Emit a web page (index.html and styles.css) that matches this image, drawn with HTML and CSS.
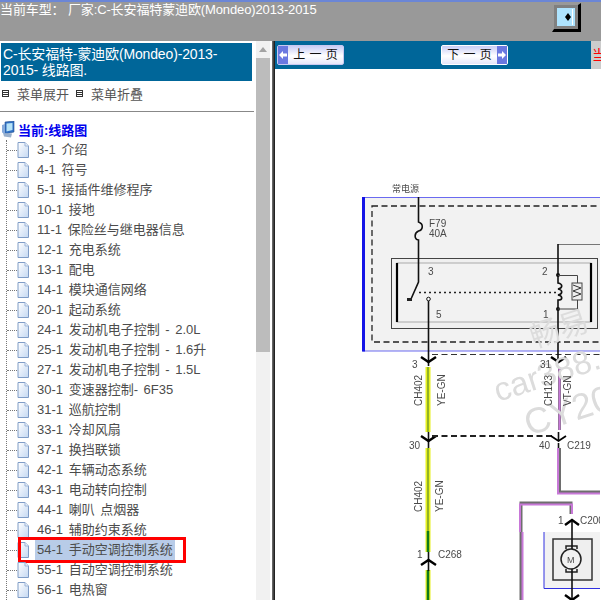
FILE: index.html
```html
<!DOCTYPE html>
<html lang="zh">
<head>
<meta charset="utf-8">
<title>线路图</title>
<link rel="stylesheet" href="styles.css">
</head>
<body>
<svg class="defs" width="0" height="0" aria-hidden="true">
  <defs>
    <linearGradient id="pg" x1="0" y1="0" x2="1" y2="1"><stop offset="0" stop-color="#ffffff"/><stop offset="1" stop-color="#c4d8f2"/></linearGradient>
    <symbol id="file" viewBox="0 0 12 16">
      <path d="M1 .5H8L11.500 4V15.500H1Z" fill="url(#pg)" stroke="#7f9cc6"/>
      <path d="M8 .5V4H11.500" fill="#e8f0fa" stroke="#9db5d8"/>
    </symbol>
  </defs>
</svg>
<header class="topbar">
  <div class="model">当前车型： 厂家:C-长安福特蒙迪欧(Mondeo)2013-2015</div>
  <div class="toggle"><span class="toggle-inner"><svg width="18" height="18" viewBox="0 0 18 18"><path d="M11 5 14 9 11 13 8 9Z" fill="#000"/><path d="M15.500 1V17" stroke="#fff"/></svg></span></div>
</header>
<main class="main">
  <aside class="side">
    <h1 class="title">C-长安福特-蒙迪欧(Mondeo)-2013-2015- 线路图.</h1>
    <div class="menu">
      <span class="menu-item"><i class="box"></i>菜单展开</span>
      <span class="menu-item"><i class="box"></i>菜单折叠</span>
    </div>
    <hr class="rule">
    <div class="root">
      <svg class="root-icon" width="13" height="17" viewBox="0 0 13 17"><path d="M3 1 12 0V11L3 13Z" fill="#2f6fc4" stroke="#25528f" stroke-width=".6"/><path d="M4.500 2.500 10.500 2V9L4.500 10.500Z" fill="#b7e3f7"/><path d="M1 12 10 12.500 9 16.500 2 15.500Z" fill="#9ab0cc"/><path d="M0 4 3 3V13L0 11.500Z" fill="#86aadb"/></svg>
      <span>当前:线路图</span>
    </div>
    <ul class="tree">
      <li><svg class="file"><use href="#file"/></svg><span class="label">3-1 介绍</span></li>
      <li><svg class="file"><use href="#file"/></svg><span class="label">4-1 符号</span></li>
      <li><svg class="file"><use href="#file"/></svg><span class="label">5-1 接插件维修程序</span></li>
      <li><svg class="file"><use href="#file"/></svg><span class="label">10-1 接地</span></li>
      <li><svg class="file"><use href="#file"/></svg><span class="label">11-1 保险丝与继电器信息</span></li>
      <li><svg class="file"><use href="#file"/></svg><span class="label">12-1 充电系统</span></li>
      <li><svg class="file"><use href="#file"/></svg><span class="label">13-1 配电</span></li>
      <li><svg class="file"><use href="#file"/></svg><span class="label">14-1 模块通信网络</span></li>
      <li><svg class="file"><use href="#file"/></svg><span class="label">20-1 起动系统</span></li>
      <li><svg class="file"><use href="#file"/></svg><span class="label">24-1 发动机电子控制 - 2.0L</span></li>
      <li><svg class="file"><use href="#file"/></svg><span class="label">25-1 发动机电子控制 - 1.6升</span></li>
      <li><svg class="file"><use href="#file"/></svg><span class="label">27-1 发动机电子控制 - 1.5L</span></li>
      <li><svg class="file"><use href="#file"/></svg><span class="label">30-1 变速器控制- 6F35</span></li>
      <li><svg class="file"><use href="#file"/></svg><span class="label">31-1 巡航控制</span></li>
      <li><svg class="file"><use href="#file"/></svg><span class="label">33-1 冷却风扇</span></li>
      <li><svg class="file"><use href="#file"/></svg><span class="label">37-1 换挡联锁</span></li>
      <li><svg class="file"><use href="#file"/></svg><span class="label">42-1 车辆动态系统</span></li>
      <li><svg class="file"><use href="#file"/></svg><span class="label">43-1 电动转向控制</span></li>
      <li><svg class="file"><use href="#file"/></svg><span class="label">44-1 喇叭 点烟器</span></li>
      <li><svg class="file"><use href="#file"/></svg><span class="label">46-1 辅助约束系统</span></li>
      <li class="current"><svg class="file"><use href="#file"/></svg><span class="label">54-1 手动空调控制系统</span><span class="callout"></span></li>
      <li><svg class="file"><use href="#file"/></svg><span class="label">55-1 自动空调控制系统</span></li>
      <li><svg class="file"><use href="#file"/></svg><span class="label">56-1 电热窗</span></li>
    </ul>
  </aside>
  <div class="scrollbar"><span class="arrow"></span><span class="thumb"></span></div>
  <div class="splitter"></div>
  <section class="content">
    <div class="toolbar">
      <div class="pager">
        <button class="page-btn prev"><span class="cap"><svg width="8" height="10" viewBox="0 0 8 10"><path d="M0 5 4 1V3.500H8V6.500H4V9Z" fill="#fff"/></svg></span><span class="btn-text">上 一 页</span></button>
        <button class="page-btn next"><span class="btn-text">下 一 页</span><span class="cap"><svg width="8" height="10" viewBox="0 0 8 10"><path d="M8 5 4 1V3.500H0V6.500H4V9Z" fill="#fff"/></svg></span></button>
      </div>
      <div class="note">当</div>
    </div>
    <svg class="diagram" viewBox="276 69 325 531" width="325" height="531">
      <!-- fuse box -->
      <rect x="364" y="197.500" width="240" height="153.500" fill="#f2f2f2" stroke="#6a6af0"/>
      <path d="M364.500 197V351.500" stroke="#1414e6" stroke-width="3"/>
      <rect x="373" y="206" width="240" height="136" fill="none" stroke="#222" stroke-width="1.300" stroke-dasharray="6 3.500"/>
      <path d="M433 354.500H604" stroke="#333" stroke-width="1.200" stroke-dasharray="6 3.500"/>
      <!-- relay -->
      <rect x="392.500" y="258.500" width="206" height="70" fill="#f0f0f0" stroke="#444"/>
      <rect x="398" y="263" width="194" height="59" fill="#f2f2f2" stroke="#aaa"/>
      <path d="M398 263V322M592 263V322" stroke="#000" stroke-width="2.200"/>
      <!-- feed line and fuse -->
      <path class="wire" d="M419.500 197V222C425 224 424 230 419.500 231C415 233 415 239 419.500 240V282L412 299"/>
      <path d="M408 298H413V301H408Z" fill="#222"/>
      <path d="M420 292.500H558" stroke="#222" stroke-width="1.500" stroke-dasharray="2 3"/>
      <circle cx="429.500" cy="299" r="1.800" fill="#fff" stroke="#111"/>
      <path class="wire" d="M429.500 301V366"/>
      <path class="chev" d="M422 357 429.500 362 437 357"/>
      <!-- coil side -->
      <path d="M601 244.500H559" stroke="#777"/>
      <path class="wire" d="M559 244V283C564 284 564 288 559 289C564 290 564 294 559 295C564 296 564 300 559 300V362"/>
      <circle cx="559" cy="275" r="2" fill="#111"/><circle cx="559" cy="309" r="2" fill="#111"/>
      <path d="M559 275.500H578.500V309H559" fill="none" stroke="#444"/>
      <rect x="573" y="283" width="10" height="17" fill="#eee" stroke="#444"/>
      <path d="M574 285 582 288 574 291 582 294 574 297" fill="none" stroke="#333"/>
      <path class="chev" d="M552 357 559.500 362 567 357"/>
      <!-- CH402 -->
      <path d="M429 367V432M429 448V531" stroke="#e6f01e" stroke-width="5"/>
      <path d="M429 367V432M429 448V531" stroke="#5c8a2a" stroke-width="1.200"/>
      <path d="M429 531V552M429 570V600" stroke="#e6f01e" stroke-width="5"/>
      <path d="M429 531V552M429 570V600" stroke="#0f7a1c" stroke-width="2.500"/>
      <path class="wire" d="M429.500 432V448M429.500 552V571"/>
      <path class="chev" d="M422 436 429.500 441 437 436"/>
      <path class="chev" d="M422 565 429.500 560 437 565"/>
      <path d="M433 436H556" stroke="#222" stroke-width="2" stroke-dasharray="6 3.500"/>
      <!-- purple wire -->
      <path class="wire-grey" d="M560.500 367V430M560.500 448V492H604"/>
      <path class="wire-purple" d="M560.500 367V430M559 448V493.500H604"/>
      <path class="wire" d="M559.500 432V440M559.500 443V448"/>
      <path class="chev thin" d="M552 436 559.500 441 567 436"/>
      <path class="wire-grey" d="M522 600V503H572V514"/>
      <path class="wire-purple" d="M523.500 600V532M521 532V504.500H573V514"/>
      <!-- motor -->
      <rect x="545" y="532" width="60" height="56" fill="#f2f2f2"/>
      <path d="M545 532V588.500H604" fill="none" stroke="#3030e0"/>
      <rect x="554" y="539" width="39" height="41" fill="#efefef" stroke="#333" stroke-width="1.500"/>
      <circle cx="572" cy="559" r="10" fill="#f2f2f2" stroke="#222" stroke-width="1.500"/>
      <path d="M567 549V546H578V549M567 569V572H578V569" fill="none" stroke="#222" stroke-width="1.500"/>
      <path class="wire" d="M573 519V549M573 569V600"/>
      <path class="chev" d="M566 525 573 520 580 525"/>
      <path class="chev" d="M566 595 573 600 580 595"/>
      <!-- watermark -->
      <g class="watermark">
        <text x="535" y="348" transform="rotate(-18 535 348)">畅易</text>
        <text class="wm-mid" x="499" y="402" transform="rotate(-18 499 402)">car388.c</text>
        <text class="wm-big" x="530" y="436" transform="rotate(-18 530 436)">CY201</text>
      </g>
      <!-- labels -->
      <g class="lbl">
        <text x="393" y="192" class="tiny">常电源</text>
        <text x="430" y="227">F79</text><text x="430" y="237">40A</text>
        <text x="429" y="275">3</text><text x="543" y="275">2</text>
        <text x="437" y="318">5</text><text x="544" y="318">1</text>
        <text x="413" y="368">3</text><text x="541" y="368">31</text>
        <text x="410" y="449">30</text><text x="540" y="449">40</text>
        <text x="568" y="449">C219</text>
        <text x="418" y="558">1</text><text x="439" y="558">C268</text>
        <text x="559" y="524">1</text><text x="581" y="524">C200</text>
        <text transform="translate(423 406) rotate(-90)">CH402</text>
        <text transform="translate(446 406) rotate(-90)">YE-GN</text>
        <text transform="translate(423 512) rotate(-90)">CH402</text>
        <text transform="translate(444 512) rotate(-90)">YE-GN</text>
        <text transform="translate(553 406) rotate(-90)">CH123</text>
        <text transform="translate(572 406) rotate(-90)">VT-GN</text>
        <text x="568" y="563" class="tiny">M</text>
      </g>
    </svg>
  </section>
</main>
</body>
</html>
```
FILE: styles.css
```css
* { box-sizing: border-box; }
html, body { margin: 0; height: 100%; overflow: hidden; background: #fff; }
body { font-family: "Liberation Sans", "Noto Sans CJK SC", sans-serif; font-size: 13px; display: flex; flex-direction: column; }
.defs { position: absolute; }

.topbar { height: 41px; flex: none; background: #999; border-top: 2px solid #6b86d6; display: flex; justify-content: space-between; color: #fff; font-size: 13px; padding-right: 20px; }
.model { line-height: 15px; white-space: pre; letter-spacing: -.12px; }
.toggle { width: 29px; height: 29px; margin-top: 1px; background: #808080; border: solid; border-color: #999 #000 #000 #999; border-width: 2px 3px 3px 2px; padding: 3px 2px 3px 3px; }
.toggle-inner { display: block; width: 18px; height: 18px; background: #aee4ff; }
.toggle-inner svg { display: block; }

.main { flex: 1; display: flex; min-height: 0; }
.side { width: 256px; flex: none; padding-top: 2px; overflow: hidden; }
.title { margin: 0 4px 0 1px; background: #006699; color: #fff; font-size: 14px; font-weight: 400; letter-spacing: -.15px; line-height: 16px; padding: 3px 30px 2px 2px; height: 38px; }
.menu { height: 24px; display: flex; align-items: center; padding-left: 2px; color: #555; gap: 7px; }
.menu-item { display: flex; align-items: center; gap: 8px; }
.box { width: 7px; height: 7px; border: 1px solid #333; background: repeating-linear-gradient(#fff 0 1px, #333 1px 2px); }
.rule { margin: 6px 2px 7px 0; border: 0; border-top: 1px solid #888; }
.root { height: 20px; display: flex; align-items: center; gap: 3px; padding-left: 2px; color: #0000ee; font-weight: 700; }
.tree { list-style: none; margin: 1px 0 0 6px; padding: 0; border-left: 1px dotted #777; color: #4c4c4c; }
.tree li { position: relative; height: 20px; display: flex; align-items: center; padding-left: 10px; white-space: nowrap; }
.tree li::before { content: ""; position: absolute; left: 0; width: 10px; top: 10px; border-top: 1px dotted #777; }
.file { width: 12px; height: 16px; flex: none; margin-right: 6px; }
.label { word-spacing: 2px; padding: 0 2px; line-height: 20px; }
.current .label { background: #b8cce8; }
.callout { position: absolute; left: 11px; top: -3px; width: 168px; height: 26px; border: 3px solid #f00; }

.scrollbar { width: 14px; flex: none; background: #f1f1f1; display: flex; flex-direction: column; align-items: center; }
.arrow { width: 0; height: 0; margin-top: 6px; border: 4px solid transparent; border-top: 0; border-bottom: 5px solid #a3a3a3; }
.thumb { width: 14px; height: 294px; margin-top: 6px; background: #bcbcbc; }
.splitter { width: 3px; flex: none; margin-left: 2px; background: linear-gradient(90deg, #777, #111); }

.content { flex: 1; min-width: 0; display: flex; flex-direction: column; overflow: hidden; }
.toolbar { height: 28px; flex: none; display: flex; }
.pager { width: 316px; background: #006699; display: flex; justify-content: space-between; padding: 4px 83px 0 2px; align-items: flex-start; }
.note { flex: 1; background: #ccc; color: #f00; font-size: 14px; line-height: 28px; padding-left: 1px; overflow: hidden; white-space: nowrap; }
.page-btn { width: 67px; height: 20px; padding: 0; display: flex; align-items: stretch; border: 1px solid #c8c8f0; border-radius: 2px; background: linear-gradient(#c8ccf5, #fff 55%, #e4e6fa); font: 12px "Liberation Sans", "Noto Sans CJK SC", sans-serif; word-spacing: 1px; color: #111; }
.next { border-color: #fff; }
.cap { width: 10px; flex: none; background: #6a78e0; display: flex; align-items: center; justify-content: center; }
.btn-text { flex: 1; line-height: 19px; text-align: center; white-space: pre; }

.diagram { display: block; flex: none; filter: blur(.3px); }
.wire { fill: none; stroke: #111; stroke-width: 1.600; }
.wire-grey { fill: none; stroke: #6e6e6e; stroke-width: 3; }
.wire-purple { fill: none; stroke: #c878d8; stroke-width: 2; }
.chev { fill: none; stroke: #000; stroke-width: 2.400; }
.chev.thin { stroke-width: 1.800; }
.lbl text { font: 10px "Liberation Sans", "Noto Sans CJK SC", sans-serif; fill: #4a4a4a; }
.lbl .tiny { font-size: 9px; }
.watermark text { font: 30px "Liberation Sans", "Noto Sans CJK SC", sans-serif; fill: #dcdcdc; }
.watermark .wm-mid { font-size: 33px; }
.watermark .wm-big { font-size: 36px; }
```
